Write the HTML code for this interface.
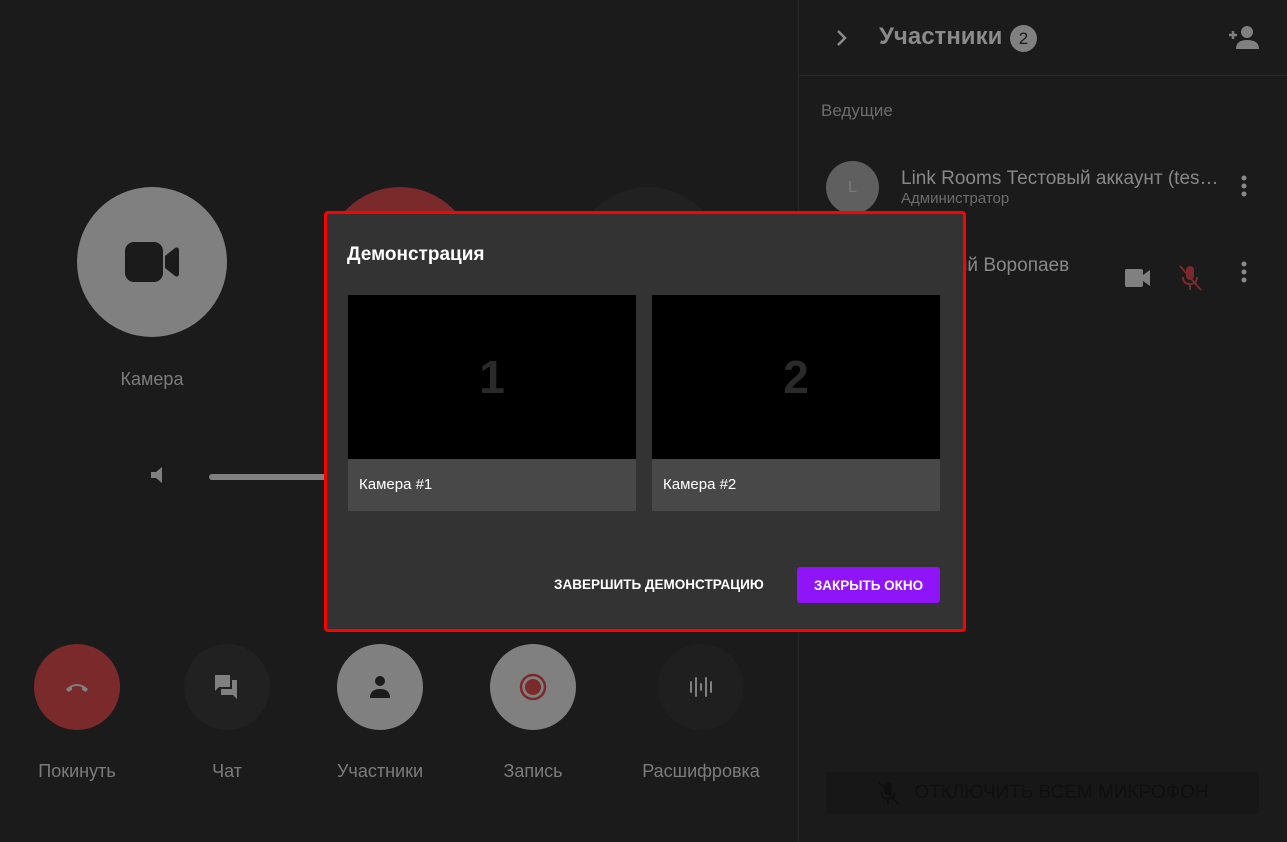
<!DOCTYPE html>
<html><head><meta charset="utf-8"><style>
*{margin:0;padding:0;box-sizing:border-box}
body{width:1287px;height:842px;background:#1b1b1b;font-family:"Liberation Sans",sans-serif;position:relative;overflow:hidden}
.a{position:absolute}
.c{position:absolute;border-radius:50%;display:flex;align-items:center;justify-content:center}
.lbl{position:absolute;color:#7c7c7c;font-size:18px;transform:translateX(-50%);white-space:nowrap}
</style></head><body>
<div class="a" style="left:798px;top:0;width:1px;height:842px;background:#262626"></div>

<div class="c" style="left:77px;top:187px;width:150px;height:150px;background:#808080">
<svg width="54" height="40" viewBox="0 0 54 40"><rect x="0" y="0" width="38" height="40" rx="9" fill="#1b1b1b"/><path d="M40 14 L50 6 Q54 4 54 9 L54 31 Q54 36 50 34 L40 26Z" fill="#1b1b1b"/></svg></div>
<div class="c" style="left:325px;top:187px;width:150px;height:150px;background:#7a2a2a"></div>
<div class="c" style="left:573px;top:187px;width:150px;height:150px;background:#212121"></div>
<div class="lbl" style="left:152px;top:369px">Камера</div>
<svg class="a" style="left:150px;top:465px" width="20" height="20" viewBox="0 0 20 20"><path d="M1 7h5l6-5v16l-6-5H1z" fill="#808080"/></svg>
<div class="a" style="left:209px;top:474px;width:120px;height:6px;border-radius:3px;background:#808080"></div>

<div class="c" style="left:34px;top:644px;width:86px;height:86px;background:#7a2a2a">
<svg width="24" height="12" viewBox="0 0 24 12"><path d="M1 8 Q12 -2 23 8 L21 11 L17 9 L17 6 Q12 4 7 6 L7 9 L3 11Z" fill="#808080"/></svg></div>
<div class="c" style="left:184px;top:644px;width:86px;height:86px;background:#212121">
<svg width="28" height="26" viewBox="0 0 28 26"><path d="M2 1h15v12H6l-4 4z" fill="#808080"/><path d="M19 6h5v19l-4-4H8v-6h11z" fill="#808080"/></svg></div>
<div class="c" style="left:337px;top:644px;width:86px;height:86px;background:#808080">
<svg width="22" height="24" viewBox="0 0 22 24"><circle cx="11" cy="6" r="5" fill="#1b1b1b"/><path d="M1 23 Q1 14 11 14 Q21 14 21 23z" fill="#1b1b1b"/></svg></div>
<div class="c" style="left:490px;top:644px;width:86px;height:86px;background:#808080">
<svg width="28" height="28" viewBox="0 0 28 28"><circle cx="14" cy="14" r="12" fill="none" stroke="#7a2a2a" stroke-width="2.5"/><circle cx="14" cy="14" r="8" fill="#7a2a2a"/></svg></div>
<div class="c" style="left:658px;top:644px;width:86px;height:86px;background:#1f1f1f">
<svg width="24" height="22" viewBox="0 0 24 22"><g stroke="#808080" stroke-width="2" stroke-linecap="round"><path d="M2 6v10M7 2v18M12 8v6M17 2v18M22 6v10"/></g></svg></div>
<div class="lbl" style="left:77px;top:761px">Покинуть</div>
<div class="lbl" style="left:227px;top:761px">Чат</div>
<div class="lbl" style="left:380px;top:761px">Участники</div>
<div class="lbl" style="left:533px;top:761px">Запись</div>
<div class="lbl" style="left:701px;top:761px">Расшифровка</div>

<svg class="a" style="left:835px;top:28px" width="14" height="20" viewBox="0 0 14 20"><path d="M3 3l7 7-7 7" fill="none" stroke="#8a8a8a" stroke-width="2.5"/></svg>
<div class="a" style="left:879px;top:23px;color:#8a8a8a;font-size:24px;font-weight:bold">Участники</div>
<div class="c" style="left:1010px;top:25px;width:27px;height:27px;background:#808080;color:#1b1b1b;font-size:17px">2</div>
<svg class="a" style="left:1228px;top:25px" width="32" height="24" viewBox="0 0 32 24"><path d="M1 10h8M5 6v8" stroke="#808080" stroke-width="2.5"/><circle cx="19" cy="7" r="6" fill="#808080"/><path d="M8 24 Q8 15 19 15 Q31 15 31 24z" fill="#808080"/></svg>
<div class="a" style="left:798px;top:75px;width:489px;height:1px;background:#2a2a2a"></div>
<div class="a" style="left:821px;top:101px;color:#6c6c6c;font-size:17px">Ведущие</div>
<div class="c" style="left:826px;top:161px;width:53px;height:53px;background:#5f5f5f;color:#7a7a7a;font-size:16px">L</div>
<div class="a" style="left:901px;top:168px;color:#888;font-size:19px;white-space:nowrap">Link Rooms Тестовый аккаунт (tes…</div>
<div class="a" style="left:901px;top:190px;color:#6c6c6c;font-size:15px">Администратор</div>
<svg class="a" style="left:1240px;top:174px" width="8" height="24" viewBox="0 0 8 24"><g fill="#8a8a8a"><circle cx="4" cy="4" r="2.5"/><circle cx="4" cy="12" r="2.5"/><circle cx="4" cy="20" r="2.5"/></g></svg>
<div class="a" style="left:901px;top:255px;color:#888;font-size:19px;white-space:nowrap">Дмитрий Воропаев</div>
<svg class="a" style="left:1125px;top:269px" width="26" height="18" viewBox="0 0 26 18"><rect x="0" y="0" width="18" height="18" rx="2" fill="#808080"/><path d="M18 6l7-5v16l-7-5z" fill="#808080"/></svg>
<svg class="a" style="left:1178px;top:264px" width="24" height="28" viewBox="0 0 24 28"><rect x="8" y="2" width="8" height="14" rx="4" fill="#7a2a2a"/><path d="M5 13q0 7 7 7t7-7M12 20v6" fill="none" stroke="#7a2a2a" stroke-width="2"/><path d="M2 2l21 24" stroke="#7a2a2a" stroke-width="2"/></svg>
<svg class="a" style="left:1240px;top:260px" width="8" height="24" viewBox="0 0 8 24"><g fill="#8a8a8a"><circle cx="4" cy="4" r="2.5"/><circle cx="4" cy="12" r="2.5"/><circle cx="4" cy="20" r="2.5"/></g></svg>
<div class="a" style="left:826px;top:772px;width:433px;height:42px;background:#171717;border-radius:3px;color:#0f0f0f;font-size:19px;display:flex;align-items:center;justify-content:center;gap:14px"><svg width="24" height="26" viewBox="0 0 24 28"><rect x="8" y="2" width="8" height="14" rx="4" fill="#0f0f0f"/><path d="M5 13q0 7 7 7t7-7M12 20v6" fill="none" stroke="#0f0f0f" stroke-width="2"/><path d="M2 2l21 24" stroke="#0f0f0f" stroke-width="2"/></svg>ОТКЛЮЧИТЬ ВСЕМ МИКРОФОН</div>

<div class="a" style="left:324px;top:211px;width:642px;height:421px;border:3px solid #ff0000;border-radius:4px;background:#333"></div>
<div class="a" style="left:347px;top:244px;color:#fff;font-size:19px;font-weight:bold">Демонстрация</div>
<div class="a" style="left:348px;top:295px;width:288px;height:164px;background:#000;color:#2a2a2a;font-size:46px;font-weight:bold;display:flex;align-items:center;justify-content:center">1</div>
<div class="a" style="left:348px;top:459px;width:288px;height:52px;background:#484848;color:#fff;font-size:15px;padding:17px 11px">Камера #1</div>
<div class="a" style="left:652px;top:295px;width:288px;height:164px;background:#000;color:#2a2a2a;font-size:46px;font-weight:bold;display:flex;align-items:center;justify-content:center">2</div>
<div class="a" style="left:652px;top:459px;width:288px;height:52px;background:#484848;color:#fff;font-size:15px;padding:17px 11px">Камера #2</div>
<div class="a" style="left:554px;top:577px;color:#fff;font-size:13.5px;font-weight:bold">ЗАВЕРШИТЬ ДЕМОНСТРАЦИЮ</div>
<div class="a" style="left:797px;top:567px;width:143px;height:36px;background:#8f14f8;border-radius:3px;color:#fff;font-size:13.5px;font-weight:bold;display:flex;align-items:center;justify-content:center">ЗАКРЫТЬ ОКНО</div>
</body></html>
